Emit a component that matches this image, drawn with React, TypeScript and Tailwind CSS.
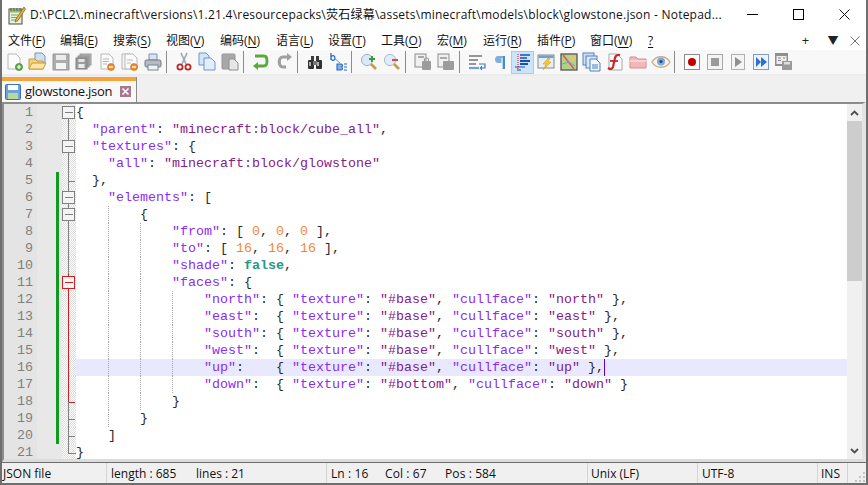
import React from 'react';

const uiFont = "font-['Open_Sans','Noto_Sans_CJK_SC',sans-serif]";

type Tok = [string, string];
const K = 'text-[#8a2cf2]';
const S = 'text-[#84208a]';
const N = 'text-[#f28a30]';
const B = 'text-[#23978a] font-bold';
const P = 'text-[#2a2a2a]';

const face = (name: string, pad: string, base: string, cull: string, tail: string): Tok[] => [
  [`"${name}"`, K],
  [`:${pad}{ `, P],
  ['"texture"', K],
  [': ', P],
  [`"${base}"`, S],
  [', ', P],
  ['"cullface"', K],
  [': ', P],
  [`"${cull}"`, S],
  [tail, P],
];

const lines: { indent: number; toks: Tok[]; guides: number[] }[] = [
  { indent: 0, guides: [], toks: [['{', P]] },
  { indent: 2, guides: [], toks: [['"parent"', K], [': ', P], ['"minecraft:block/cube_all"', S], [',', P]] },
  { indent: 2, guides: [], toks: [['"textures"', K], [': {', P]] },
  { indent: 4, guides: [], toks: [['"all"', K], [': ', P], ['"minecraft:block/glowstone"', S]] },
  { indent: 2, guides: [], toks: [['},', P]] },
  { indent: 4, guides: [], toks: [['"elements"', K], [': [', P]] },
  { indent: 8, guides: [4], toks: [['{', P]] },
  { indent: 12, guides: [4, 8], toks: [['"from"', K], [': [ ', P], ['0', N], [', ', P], ['0', N], [', ', P], ['0', N], [' ],', P]] },
  { indent: 12, guides: [4, 8], toks: [['"to"', K], [': [ ', P], ['16', N], [', ', P], ['16', N], [', ', P], ['16', N], [' ],', P]] },
  { indent: 12, guides: [4, 8], toks: [['"shade"', K], [': ', P], ['false', B], [',', P]] },
  { indent: 12, guides: [4, 8], toks: [['"faces"', K], [': {', P]] },
  { indent: 16, guides: [4, 8, 12], toks: face('north', ' ', '#base', 'north', ' },') },
  { indent: 16, guides: [4, 8, 12], toks: face('east', '  ', '#base', 'east', ' },') },
  { indent: 16, guides: [4, 8, 12], toks: face('south', ' ', '#base', 'south', ' },') },
  { indent: 16, guides: [4, 8, 12], toks: face('west', '  ', '#base', 'west', ' },') },
  { indent: 16, guides: [4, 8, 12], toks: face('up', '    ', '#base', 'up', ' },') },
  { indent: 16, guides: [4, 8, 12], toks: face('down', '  ', '#bottom', 'down', ' }') },
  { indent: 12, guides: [4, 8], toks: [['}', P]] },
  { indent: 8, guides: [4], toks: [['}', P]] },
  { indent: 4, guides: [], toks: [[']', P]] },
  { indent: 0, guides: [], toks: [['}', P]] },
];

const guideClass: Record<number, string> = {
  4: 'left-[32px]',
  8: 'left-[64px]',
  12: 'left-[96px]',
};

// fold margin drawing for one row: box / line / tail, grey or red
function FoldMark({ row }: { row: number }) {
  const red = row >= 11 && row <= 18;
  const c = red ? '#d02020' : '#808080';
  const isBox = [1, 3, 6, 7, 11].includes(row);
  const isTail = [5, 18, 19, 20, 21].includes(row);
  return (
    <svg width="14" height="17" className="block" shapeRendering="crispEdges">
      {row === 21 ? (
        <path d="M6.5 0V9.5H14" stroke={c} fill="none" />
      ) : (
        <path d={row === 1 ? 'M6.5 9V17' : 'M6.5 0V17'} stroke={row === 18 ? '#808080' : c} fill="none" />
      )}
      {row === 18 && <path d="M6.5 0V9" stroke={c} fill="none" />}
      {isTail && row !== 21 && <path d="M6.5 9.5H13" stroke={c} fill="none" />}
      {isBox && (
        <g>
          <rect x="0.5" y="2.5" width="12" height="12" fill="#f4f4f4" stroke={c} />
          <path d="M2.5 8.5H10.5" stroke={c} />
        </g>
      )}
    </svg>
  );
}

function Ico({ children }: { children: React.ReactNode }) {
  return (
    <svg width="20" height="20" viewBox="0 0 20 20" className="block">
      {children}
    </svg>
  );
}

const Page = ({ x = 3, fill = '#fbfbfb', stroke = '#b8b8b8' }: { x?: number; fill?: string; stroke?: string }) => (
  <path d={`M${x} 2H${x + 8}L${x + 12} 6V17H${x}Z`} fill={fill} stroke={stroke} />
);
const Minus = ({ cx = 14, cy = 15 }: { cx?: number; cy?: number }) => (
  <g>
    <circle cx={cx} cy={cy} r="3.5" fill="#ef8a2a" stroke="#c96a14" strokeWidth="0.6" />
    <rect x={cx - 2} y={cy - 0.7} width="4" height="1.4" fill="#fff" />
  </g>
);

const icons: Record<string, React.ReactNode> = {
  newDoc: (
    <Ico>
      <Page />
      <circle cx="14" cy="15" r="3.6" fill="#5faa4a" stroke="#3f7f30" strokeWidth="0.6" />
      <path d="M14 13V17M12 15H16" stroke="#fff" strokeWidth="1.2" />
    </Ico>
  ),
  open: (
    <Ico>
      <path d="M7 1H14L17 4V11H7Z" fill="#cfe0f5" stroke="#6d96cc" />
      <path d="M1 7H7L9 9H15V17H1Z" fill="#f5d27a" stroke="#c89a3a" />
      <path d="M1 17L4 11H18L15 17Z" fill="#fbe6a6" stroke="#c89a3a" />
    </Ico>
  ),
  save: (
    <Ico>
      <path d="M2 2H18V18H2Z" fill="#acacac" stroke="#989898" />
      <rect x="5" y="3" width="10" height="5" fill="#ececec" />
      <rect x="5" y="11" width="10" height="6" fill="#f4f4f4" />
    </Ico>
  ),
  saveAll: (
    <Ico>
      <rect x="6" y="2" width="11" height="11" fill="#b4b4b4" stroke="#9a9a9a" />
      <rect x="4" y="4" width="11" height="11" fill="#a8a8a8" stroke="#909090" />
      <rect x="2" y="6" width="11" height="11" fill="#9c9c9c" stroke="#808080" />
      <rect x="4.5" y="7" width="6" height="3" fill="#e4e4e4" />
      <rect x="4.5" y="12" width="6" height="4" fill="#ececec" />
    </Ico>
  ),
  close: (
    <Ico>
      <Page x={4} />
      <path d="M6 7H12M6 9.5H12M6 12H10" stroke="#b5b5b5" />
      <Minus />
    </Ico>
  ),
  closeAll: (
    <Ico>
      <Page x={2} fill="#f4f4f4" />
      <Page x={5} />
      <path d="M7 8H13M7 11H11" stroke="#bcbcbc" />
      <Minus />
    </Ico>
  ),
  print: (
    <Ico>
      <path d="M6 2H14V8H6Z" fill="#d8e4f2" stroke="#7b93b5" />
      <rect x="2" y="8" width="16" height="7" rx="1.5" fill="#b5bcc6" stroke="#6f7785" />
      <rect x="5" y="13" width="10" height="5" fill="#f2f2f2" stroke="#7b8390" />
    </Ico>
  ),
  cut: (
    <Ico>
      <path d="M13 1L8 12M7 1L12 12" stroke="#9aa6b5" strokeWidth="1.6" />
      <circle cx="6" cy="15" r="2.6" fill="none" stroke="#b52a2a" strokeWidth="1.8" />
      <circle cx="14" cy="15" r="2.6" fill="none" stroke="#b52a2a" strokeWidth="1.8" />
    </Ico>
  ),
  copy: (
    <Ico>
      <path d="M2 1H9L12 4V13H2Z" fill="#d5e5f8" stroke="#6d96cc" />
      <path d="M7 6H14L18 10V18H7Z" fill="#e4eefb" stroke="#6d96cc" />
    </Ico>
  ),
  paste: (
    <Ico>
      <rect x="2" y="2" width="13" height="15" rx="1" fill="#a8a8a8" stroke="#969696" />
      <path d="M9 7H14L18 11V18H9Z" fill="#e6e6e6" stroke="#8c8c8c" />
    </Ico>
  ),
  undo: (
    <Ico>
      <path d="M4 4H13C17 4 17 14 13 14H5" fill="none" stroke="#5aa83e" strokeWidth="2.8" />
      <path d="M7 10L2 14L7 18Z" fill="#5aa83e" />
    </Ico>
  ),
  redo: (
    <Ico>
      <path d="M16 5H9C4 5 4 15 9 15H12" fill="none" stroke="#a0a0a0" strokeWidth="3.2" />
      <path d="M13 1L18 5L13 9Z" fill="#a0a0a0" />
    </Ico>
  ),
  find: (
    <Ico>
      <rect x="6" y="4" width="3" height="5" fill="#3c3c3c" />
      <rect x="11" y="4" width="3" height="5" fill="#3c3c3c" />
      <rect x="3" y="8" width="6" height="9" rx="1" fill="#333" />
      <rect x="11" y="8" width="6" height="9" rx="1" fill="#333" />
      <rect x="8" y="9" width="4" height="4" fill="#777" />
      <rect x="4" y="10" width="2" height="4" fill="#b0b0b0" />
      <rect x="12" y="10" width="2" height="4" fill="#b0b0b0" />
    </Ico>
  ),
  replace: (
    <Ico>
      <path d="M3 1V8M3 5C4 3 7 3 7 6S4 9 3 7" fill="none" stroke="#2468c8" strokeWidth="1.3" />
      <path d="M6 6L12 11" stroke="#6aa0dc" />
      <path d="M9 12H13C15 12 15 15 13 15C15 15 15 18 13 18H9Z" fill="#7fb0ea" stroke="#2468c8" strokeWidth="1.1" />
      <path d="M16 12H19M16 15H19M16 18H19" stroke="#2468c8" />
    </Ico>
  ),
  zoomIn: (
    <Ico>
      <path d="M11 11L17 17" stroke="#c89a4a" strokeWidth="2.6" />
      <circle cx="8" cy="8" r="5.6" fill="#d8eaf8" stroke="#9db4c8" />
      <path d="M13 4V10M10 7H16" stroke="#3e9a35" strokeWidth="2" />
    </Ico>
  ),
  zoomOut: (
    <Ico>
      <path d="M11 11L17 17" stroke="#c89a4a" strokeWidth="2.6" />
      <circle cx="8" cy="8" r="5.6" fill="#e0ecf8" stroke="#a8bccc" />
      <path d="M10 8H16" stroke="#d94a4a" strokeWidth="2" />
    </Ico>
  ),
  syncV: (
    <Ico>
      <rect x="2" y="2" width="11" height="13" fill="#f0f0f0" stroke="#8c8c8c" />
      <rect x="5" y="4" width="6" height="2" fill="#aaa" />
      <rect x="9" y="9" width="9" height="9" rx="1" fill="#9c9c9c" />
      <path d="M11.5 9V7.5C11.5 5.5 15.5 5.5 15.5 7.5V9" fill="none" stroke="#9c9c9c" strokeWidth="1.2" />
    </Ico>
  ),
  syncH: (
    <Ico>
      <rect x="2" y="2" width="11" height="13" fill="#f0f0f0" stroke="#8c8c8c" />
      <rect x="4" y="5" width="7" height="2" fill="#aaa" />
      <rect x="7" y="9" width="11" height="9" rx="1" fill="#9c9c9c" />
    </Ico>
  ),
  wrap: (
    <Ico>
      <path d="M2 4H15M2 8H11M2 12H9" stroke="#333" strokeWidth="1.1" />
      <path d="M2 16H12" stroke="#6d9fd8" strokeWidth="2.2" />
      <path d="M12 12H18V16H14" fill="none" stroke="#3a78c0" strokeWidth="1.2" />
      <path d="M15 13.5L12.5 16L15 18.5Z" fill="#3a78c0" />
    </Ico>
  ),
  para: (
    <Ico>
      <path d="M8 4H15V17H12.5V6H11.5V11H8C4 11 4 4 8 4Z" fill="#7fb0dc" />
      <path d="M13 4H15V17H13Z" fill="#4d8ac8" />
    </Ico>
  ),
  indent: (
    <Ico>
      <path d="M5 2V18" stroke="#d22" strokeWidth="1" strokeDasharray="1 1" />
      <path d="M7 3H17M7 6H14" stroke="#1a50b0" strokeWidth="1.3" />
      <path d="M7 9H17M7 12H15" stroke="#1a50b0" strokeWidth="2" />
      <path d="M2 15H12M4 18H8" stroke="#1a50b0" strokeWidth="1.2" />
    </Ico>
  ),
  lightning: (
    <Ico>
      <rect x="2" y="3" width="16" height="13" fill="#e8eef5" stroke="#7f8a96" />
      <rect x="2.5" y="3.5" width="15" height="2.5" fill="#6d9fd8" />
      <path d="M12 6L7 12H10L7 18L15 10H12L14 6Z" fill="#f0c93a" stroke="#c89a1a" strokeWidth="0.5" />
    </Ico>
  ),
  map: (
    <Ico>
      <rect x="2" y="2" width="16" height="16" fill="#b6cf8a" stroke="#555" strokeWidth="1.3" />
      <rect x="11" y="3" width="6" height="6" fill="#d8c87a" />
      <path d="M4 3L15 17" stroke="#d9603a" strokeWidth="1.5" />
      <path d="M3 12L10 10L16 14" stroke="#6fa4d0" fill="none" />
    </Ico>
  ),
  docs: (
    <Ico>
      <rect x="1" y="1" width="11" height="12" fill="#cfe0f5" stroke="#4f82bf" />
      <rect x="4" y="4" width="11" height="12" fill="#dde9f8" stroke="#4f82bf" />
      <path d="M8 7H14L18 11V19H8Z" fill="#f2f6fc" stroke="#4f82bf" />
      <rect x="10" y="12" width="6" height="5" fill="#9dbbe0" />
    </Ico>
  ),
  func: (
    <Ico>
      <path d="M4 2H12L17 7V18H4Z" fill="#fbfbfb" stroke="#a8a8a8" />
      <path d="M15 3C11 2 10 5 9.5 8L8 15C7.5 17 5 17.5 3 16" fill="none" stroke="#c8252e" strokeWidth="2.2" />
      <path d="M5 9H13" stroke="#c8252e" strokeWidth="1.8" />
    </Ico>
  ),
  folder: (
    <Ico>
      <path d="M2 5H8L10 7H18V16H2Z" fill="#f2b8b8" stroke="#d09090" />
      <path d="M2 9H18" stroke="#fadcdc" strokeWidth="1.5" />
    </Ico>
  ),
  eye: (
    <Ico>
      <path d="M1 10C5 3 15 3 19 10C15 17 5 17 1 10Z" fill="#f4f4f4" stroke="#c8ae84" strokeWidth="1.4" />
      <circle cx="10" cy="9.5" r="4" fill="#7fa7d8" />
      <circle cx="10" cy="9.5" r="1.6" fill="#2c4a78" />
    </Ico>
  ),
  record: (
    <Ico>
      <rect x="2.5" y="2.5" width="15" height="15" fill="#fbfbfb" stroke="#8c8c8c" />
      <circle cx="10" cy="10" r="4" fill="#c00000" />
    </Ico>
  ),
  stop: (
    <Ico>
      <rect x="2.5" y="2.5" width="15" height="15" fill="#f4f4f4" stroke="#a8a8a8" />
      <rect x="6" y="6" width="8" height="8" fill="#9a9a9a" />
    </Ico>
  ),
  play: (
    <Ico>
      <rect x="3.5" y="2.5" width="13" height="15" fill="#f4f4f4" stroke="#b0b0b0" />
      <path d="M7 5L14 10L7 15Z" fill="#8f8f8f" />
    </Ico>
  ),
  fast: (
    <Ico>
      <rect x="2.5" y="2.5" width="15" height="15" fill="#eef4fc" stroke="#7f9cc8" />
      <path d="M5 5L10 10L5 15Z" fill="#2f6fd0" />
      <path d="M10 5L16 10L10 15Z" fill="#2f6fd0" />
    </Ico>
  ),
  saveMacro: (
    <Ico>
      <rect x="1" y="1" width="13" height="13" fill="#8f8f8f" />
      <rect x="2.5" y="4" width="10" height="8" fill="#ededed" />
      <path d="M4 6H7M4 8.5H7M9 6H11" stroke="#888" />
      <rect x="8" y="9" width="10" height="9" fill="#9a9a9a" />
      <rect x="10" y="10" width="6" height="2.5" fill="#dedede" />
    </Ico>
  ),
};

const toolbar: (string | null)[] = [
  'newDoc', 'open', 'save', 'saveAll', 'close', 'closeAll', 'print', null,
  'cut', 'copy', 'paste', null,
  'undo', 'redo', null,
  'find', 'replace', null,
  'zoomIn', 'zoomOut', null,
  'syncV', 'syncH', null,
  'wrap', 'para', 'indent', 'lightning', 'map', 'docs', 'func', 'folder', 'eye', null,
  'record', 'stop', 'play', 'fast', 'saveMacro',
];

const menus: [string, string, string, string][] = [
  ['文件(', 'F', ')', 'w-[52px]'],
  ['编辑(', 'E', ')', 'w-[53px]'],
  ['搜索(', 'S', ')', 'w-[53px]'],
  ['视图(', 'V', ')', 'w-[54px]'],
  ['编码(', 'N', ')', 'w-[56px]'],
  ['语言(', 'L', ')', 'w-[52px]'],
  ['设置(', 'T', ')', 'w-[53px]'],
  ['工具(', 'O', ')', 'w-[56px]'],
  ['宏(', 'M', ')', 'w-[46px]'],
  ['运行(', 'R', ')', 'w-[54px]'],
  ['插件(', 'P', ')', 'w-[53px]'],
  ['窗口(', 'W', ')', 'w-[58px]'],
  ['', '?', '', 'w-[20px]'],
];

function StatusCell({ className, children }: { className: string; children: React.ReactNode }) {
  return <div className={`h-full flex items-center pt-[1px] border-r border-[#d4d4d4] ${className}`}>{children}</div>;
}

export default function App() {
  return (
    <div className={`w-[868px] h-[485px] overflow-hidden flex flex-col bg-[#f0f0f0] border-x-2 border-[#6e6e6e] text-[#111] ${uiFont}`}>
      {/* title bar */}
      <div className="h-[30px] -mx-[2px] bg-white flex items-center shrink-0">
        <svg width="18" height="19" viewBox="0 0 18 19" className="ml-[8px] mr-[4px]">
          <rect x="1" y="3" width="13" height="15" fill="#e8f0d8" stroke="#4a4a4a" />
          <rect x="1.5" y="3.5" width="12" height="3" fill="#8cc060" />
          <path d="M3 2V5M6 2V5M9 2V5M12 2V5" stroke="#555" />
          <path d="M3 9H10M3 11.5H9M3 14H8" stroke="#8a9a8a" />
          <path d="M16 1L8 13L7 16L10 14.5L17.5 3Z" fill="#e9b23a" stroke="#7a5a18" strokeWidth="0.7" />
        </svg>
        <span className="text-[12px] leading-[30px] tracking-[0.23px] whitespace-nowrap">
          D:\PCL2\.minecraft\versions\1.21.4\resourcepacks\荧石绿幕\assets\minecraft\models\block\glowstone.json - Notepad...
        </span>
        <div className="ml-auto mr-[1px] flex items-center">
          <div className="w-[46px] h-[30px] flex items-center justify-center">
            <div className="w-[11px] h-px bg-black mb-[1px]" />
          </div>
          <div className="w-[46px] h-[30px] flex items-center justify-center">
            <div className="w-[11px] h-[11px] border border-black mb-[1px]" />
          </div>
          <div className="w-[46px] h-[30px] flex items-center justify-center">
            <svg width="11" height="11" viewBox="0 0 11 11" className="mb-[1px]">
              <path d="M0.5 0.5L10.5 10.5M10.5 0.5L0.5 10.5" stroke="#111" />
            </svg>
          </div>
        </div>
      </div>

      {/* menu bar */}
      <div className="h-[20px] -mx-[2px] bg-white flex items-center pl-[8px] pt-[2px] shrink-0 text-[12px]">
        {menus.map(([a, u, b, w]) => (
          <span key={u} className={`${w} shrink-0 whitespace-nowrap`}>
            {a}
            <span className="underline underline-offset-2">{u}</span>
            {b}
          </span>
        ))}
        <div className="ml-auto flex items-center text-[#222]">
          <span className="w-[27px] text-center text-[13px] mr-[2px]">+</span>
          <span className="w-[24px] text-center text-[11px]">▼</span>
          <svg width="10" height="10" viewBox="0 0 10 10" className="ml-[5px] mr-[8px]">
            <path d="M0.5 0.5L9.5 9.5M9.5 0.5L0.5 9.5" stroke="#777" />
          </svg>
        </div>
      </div>

      {/* toolbar */}
      <div className="h-[26px] -mx-[2px] bg-[#f8f8f8] border-b-2 border-[#ececec] flex items-center pl-[3px] shrink-0">
        {toolbar.map((name, i) =>
          name ? (
            <div
              key={i}
              className={`w-[23px] h-[23px] flex items-center justify-center shrink-0 ${
                name === 'indent' ? 'bg-[#cce4f8] border border-[#a4cdf0]' : ''
              }`}
            >
              {icons[name]}
            </div>
          ) : (
            <div key={i} className="w-[8px] h-[22px] flex justify-start pl-[2px] shrink-0">
              <div className="w-px h-full bg-[#8c8c8c]" />
            </div>
          )
        )}
      </div>

      {/* tab bar */}
      <div className="h-[26px] bg-[#f0f0f0] flex items-end shrink-0">
        <div className="w-[135px] h-[25px] bg-[#f9f9f9] border-r border-[#8c8c8c] flex flex-col">
          <div className="h-[4px] bg-[#f8a23a] shrink-0" />
          <div className="flex-1 flex items-center pl-[3px]">
            <svg width="16" height="16" viewBox="0 0 16 16" className="shrink-0">
              <rect x="0.5" y="0.5" width="15" height="15" rx="1" fill="#6ea2dc" stroke="#3a70b8" />
              <rect x="3" y="1" width="10" height="5" fill="#fff" />
              <rect x="3" y="9" width="10" height="6" fill="#b8d89a" />
            </svg>
            <span className="ml-[4px] text-[13px] tracking-[-0.25px] leading-none w-[95px] whitespace-nowrap">glowstone.json</span>
            <svg width="11" height="11" viewBox="0 0 11 11" className="shrink-0">
              <rect width="11" height="11" fill="#a87892" />
              <path d="M2.5 2.5L8.5 8.5M8.5 2.5L2.5 8.5" stroke="#fff" strokeWidth="1.6" />
            </svg>
          </div>
        </div>
      </div>

      {/* editor frame */}
      <div className="flex-1 min-h-0 border-t-2 border-l-2 border-r-[4px] border-b-[3px] border-t-[#8c8c8c] border-l-[#8c8c8c] border-r-[#e4e4e4] border-b-[#dcdcdc] bg-white flex">
        <div className="flex-1 min-w-0 overflow-hidden font-['Liberation_Mono',monospace] text-[13.33px] leading-[17px]">
          {lines.map((line, i) => {
            const row = i + 1;
            const current = row === 16;
            return (
              <div key={row} className="flex h-[17px]">
                <div className="w-[29px] shrink-0 bg-[#e4e4e4] text-[#808080] text-right pr-[4px] box-content">{row}</div>
                <div className="w-[25px] shrink-0 bg-[#e8e8e8] flex justify-end pr-[3px]">
                  {row >= 5 && row <= 20 && <div className="w-[3px] h-full bg-[#109a1e]" />}
                </div>
                <div className="w-[14px] shrink-0 bg-[repeating-conic-gradient(#dcdcdc_0_25%,#ffffff_0_50%)] bg-[length:2px_2px]">
                  <FoldMark row={row} />
                </div>
                <div className={`relative flex-1 whitespace-pre ${current ? 'bg-[#e8e8ff]' : 'bg-white'}`}>
                  {line.guides.map((g) => (
                    <div key={g} className={`absolute top-0 bottom-0 w-px border-l border-dotted border-[#a8a8a8] ${guideClass[g]}`} />
                  ))}
                  <span>{' '.repeat(line.indent)}</span>
                  {line.toks.map(([t, c], j) => (
                    <span key={j} className={c}>
                      {t}
                    </span>
                  ))}
                  {current && <span className="inline-block w-px h-[17px] bg-[#6a00d0] align-top" />}
                </div>
              </div>
            );
          })}
        </div>

        {/* scrollbar */}
        <div className="w-[15px] shrink-0 bg-[#f0f0f0] flex flex-col">
          <div className="h-[17px] flex items-center justify-center shrink-0">
            <svg width="9" height="6" viewBox="0 0 9 6">
              <path d="M1 5L4.5 1.5L8 5" fill="none" stroke="#505050" strokeWidth="1.8" />
            </svg>
          </div>
          <div className="h-[160px] bg-[#cdcdcd] shrink-0" />
          <div className="flex-1" />
          <div className="h-[17px] flex items-center justify-center shrink-0">
            <svg width="9" height="6" viewBox="0 0 9 6">
              <path d="M1 1L4.5 4.5L8 1" fill="none" stroke="#505050" strokeWidth="1.8" />
            </svg>
          </div>
        </div>
      </div>

      {/* status bar */}
      <div className="h-[23px] -mx-[2px] bg-[#f0f0f0] border-t border-b-2 border-x-2 border-[#6e6e6e] flex items-center shrink-0 text-[12px] whitespace-nowrap">
        <StatusCell className="w-[105px] pl-[1px]">JSON file</StatusCell>
        <StatusCell className="w-[220px] pl-[4px]">
          <span className="w-[85px]">length : 685</span>
          <span>lines : 21</span>
        </StatusCell>
        <StatusCell className="w-[261px] pl-[4px] tracking-[0.1px]">
          <span className="w-[54px]">Ln : 16</span>
          <span className="w-[60px]">Col : 67</span>
          <span>Pos : 584</span>
        </StatusCell>
        <StatusCell className="w-[110px] pl-[3px]">Unix (LF)</StatusCell>
        <StatusCell className="w-[120px] pl-[4px]">UTF-8</StatusCell>
        <StatusCell className="w-[30px] pl-[3px]">INS</StatusCell>
        <div className="flex-1 h-full flex items-end justify-end pr-[1px] pb-[1px]">
          <svg width="10" height="10" viewBox="0 0 10 10" className="block">
            <path d="M8 0H10V2H8ZM4 4H6V6H4ZM8 4H10V6H8ZM0 8H2V10H0ZM4 8H6V10H4ZM8 8H10V10H8Z" fill="#c4c4c4" />
          </svg>
        </div>
      </div>
    </div>
  );
}
